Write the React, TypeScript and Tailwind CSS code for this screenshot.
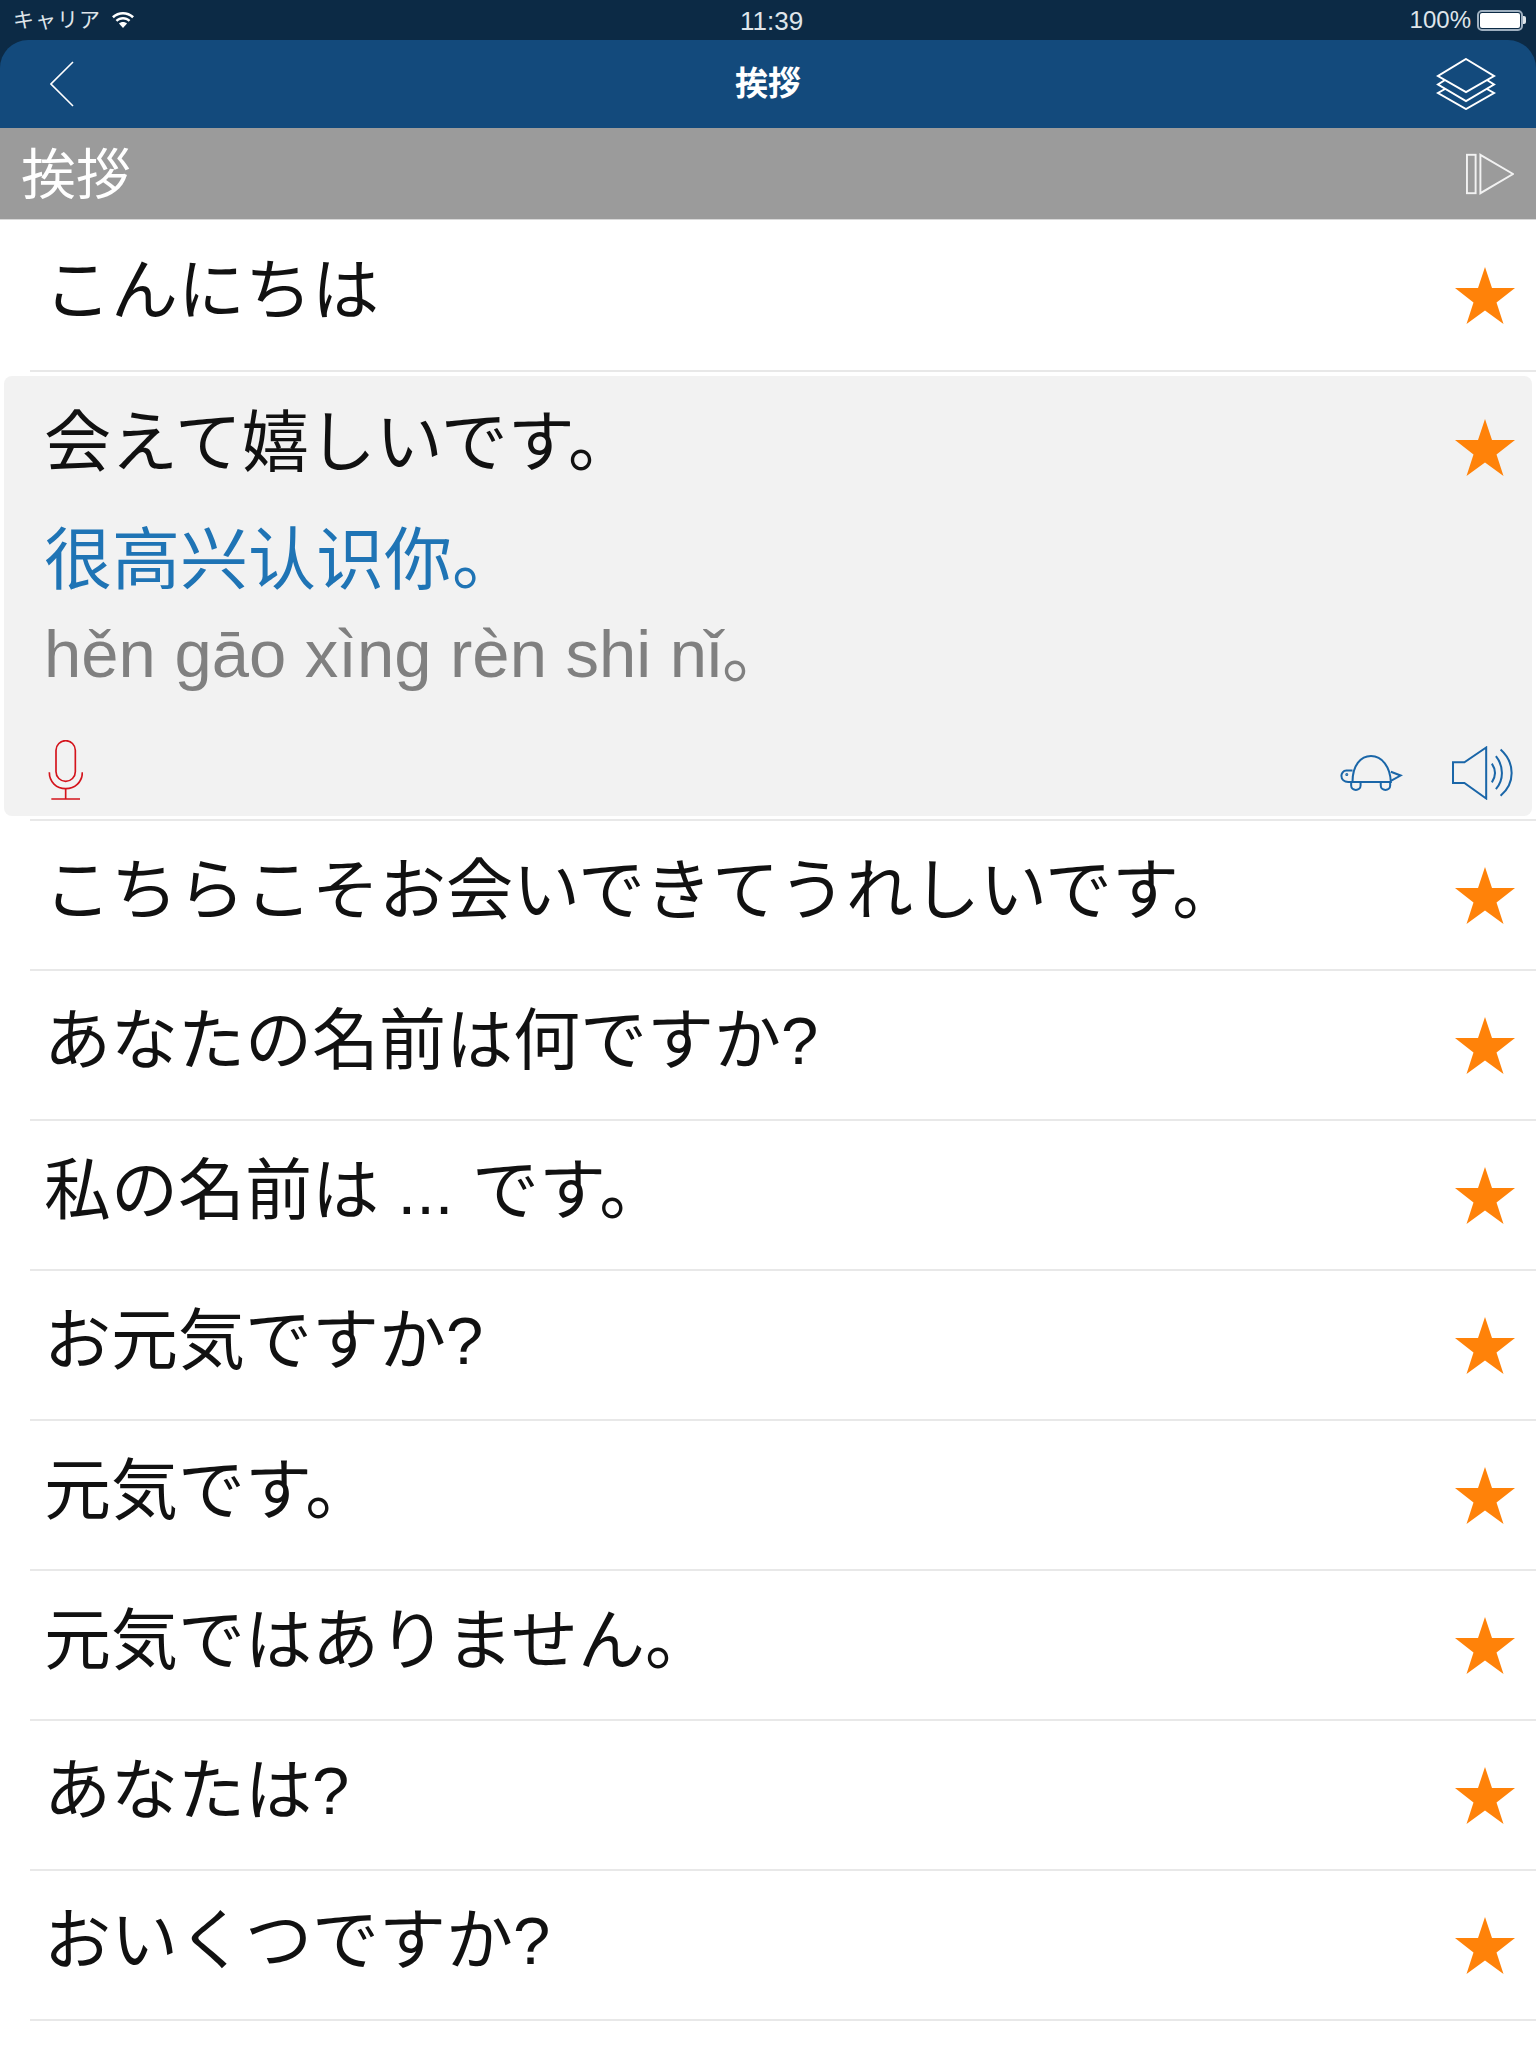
const sans = 'font-["Liberation_Sans","Noto_Sans_CJK_JP",sans-serif]';

function Star() {
  return (
    <svg width="60" height="58" viewBox="0 0 60 58" className="shrink-0">
      <polygon points="30,0 37,21 60,21 41.5,35.5 48.5,57 30,43.5 11.5,57 18.5,35.5 0,21 23,21" fill="#ff8209" />
    </svg>
  );
}

function Row({ text, pl = "pl-[14px]", h = "h-[150px]" }: { text: string; pl?: string; h?: string }) {
  return (
    <div className={`ml-[30px] ${h} flex items-center justify-between border-b-2 border-[#e8e8e8] pr-[21px]`}>
      <span className={`${pl} text-[67px] leading-none text-[#111] whitespace-nowrap pb-[10px]`}>{text}</span>
      <div className="pt-[2px]"><Star /></div>
    </div>
  );
}

function Turtle() {
  return (
    <svg width="64" height="37" viewBox="120 95 190 110" fill="none" stroke="#1a66a8" strokeWidth="6">
      <path d="M160 175 C160 125 185 98 215 98 C248 98 272 130 274 175 Z" />
      <path d="M160 141 H142 C132 141 127 150 127 157 C127 168 136 175 147 175 H160" />
      <path d="M274 145 L303 156 L274 172" />
      <path d="M156 176 V186 C156 203 184 203 184 186 V176" />
      <path d="M244 176 V186 C244 203 272 203 272 186 V176" />
      <circle cx="143" cy="153" r="1.5" fill="#1a66a8" />
    </svg>
  );
}

function Speaker() {
  return (
    <svg width="62" height="54" viewBox="455 70 185 160" fill="none" stroke="#1a66a8" strokeWidth="6">
      <path d="M458 118 H492 L557 74 V226 L492 180 H458 Z" />
      <path d="M574 122 C586 140 586 160 574 178" />
      <path d="M586 100 C610 130 610 170 586 198" />
      <path d="M600 80 C644 120 644 180 600 218" />
    </svg>
  );
}

function Mic() {
  return (
    <svg width="35" height="60" viewBox="145 1140 105 180" fill="none" stroke="#d4141c" strokeWidth="5">
      <rect x="169" y="1142" width="58" height="122" rx="29" />
      <path d="M149 1237 C149 1266 170 1286 198 1286 C226 1286 248 1266 248 1237" />
      <path d="M198 1286 V1317 M155 1317 H241" />
    </svg>
  );
}

export default function App() {
  return (
    <div className={`w-[1536px] h-[2048px] bg-white overflow-hidden ${sans}`}>
      <div className="h-[40px] bg-[#0c2a45] flex items-center justify-between pl-[13px] pr-[10px] text-[#dfe5ea] relative">
        <div className="flex items-center gap-[10px]">
          <span className="text-[21px] tracking-[1px]">キャリア</span>
          <svg width="24" height="18" viewBox="0 0 24 18" fill="white">
            <path d="M12 17 L8 12.5 C10 10.5 14 10.5 16 12.5 Z" />
            <path d="M6.3 10.7 C9.5 7.6 14.5 7.6 17.7 10.7 L19.4 9 C15.2 5 8.8 5 4.6 9 Z" />
            <path d="M2.8 7.2 C8 2.4 16 2.4 21.2 7.2 L23 5.3 C16.8 -0.4 7.2 -0.4 1 5.3 Z" />
          </svg>
        </div>
        <span className="absolute left-[740px] top-[6px] text-[26px] leading-[30px] font-medium">11:39</span>
        <div className="flex items-center gap-[6px]">
          <span className="text-[24px] leading-none">100%</span>
          <div className="flex items-center">
            <div className="w-[46px] h-[21px] rounded-[5px] border-2 border-[#9fb0c0] p-[1px]">
              <div className="w-full h-full bg-white rounded-[2px]" />
            </div>
            <div className="w-[3px] h-[8px] bg-[#dfe5ea] rounded-r-[2px]" />
          </div>
        </div>
      </div>

      <div className="bg-[#0c2a45]">
        <div className="h-[88px] bg-[#134a7c] rounded-t-[28px] flex items-center justify-between pl-[50px] pr-[40px] relative">
          <svg width="24" height="46" viewBox="0 0 24 46" fill="none" stroke="white" strokeWidth="1.6">
            <path d="M23 1 L1 23 L23 45" />
          </svg>
          <span className="absolute left-0 right-0 text-center text-white font-bold text-[33px] leading-none pb-[2px]">挨拶</span>
          <svg width="60" height="52" viewBox="0 0 60 52" fill="none" stroke="white" strokeWidth="2">
            <path d="M30 1 L58 18 L30 34 L2 18 Z" />
            <path d="M9 22 L2 26.5 L30 43 L58 26.5 L51 22" />
            <path d="M9 31 L2 35 L30 51 L58 35 L51 31" />
          </svg>
        </div>
      </div>

      <div className="h-[92px] bg-[#9b9b9b] border-b border-[#d8d8d8] flex items-center justify-between pl-[21px] pr-[22px]">
        <span className="text-[55px] leading-none text-white pt-[3px]">挨拶</span>
        <svg width="48" height="42" viewBox="0 0 50 42" fill="none" stroke="#f2f2f2" strokeWidth="2">
          <rect x="1" y="1" width="9" height="40" />
          <path d="M15 1 L49 21 L15 41 Z" />
        </svg>
      </div>

      <Row text="こんにちは" h="h-[152px]" />

      <div className="mx-[4px] mt-[4px] h-[440px] bg-[#f2f2f2] rounded-[8px] flex flex-col pl-[40px] pr-[17px]">
        <div className="flex justify-between pt-[29px] h-[128px]">
          <span className="text-[67px] leading-[76px] text-[#111] whitespace-nowrap">会えて嬉しいです。</span>
          <div className="pt-[14px]"><Star /></div>
        </div>
        <span className='mt-[16px] text-[68px] leading-[80px] text-[#1f74b5] whitespace-nowrap font-["Liberation_Sans","Noto_Sans_CJK_SC",sans-serif]'>很高兴认识你。</span>
        <span className='mt-[14px] text-[67px] leading-[80px] text-[#808080] whitespace-nowrap font-["Liberation_Sans","Noto_Sans_CJK_SC",sans-serif]'>hěn gāo xìng rèn shi nǐ。</span>
        <div className="mt-auto mb-[16px] flex items-end justify-between">
          <div className="pl-[4px]"><Mic /></div>
          <div className="flex items-end gap-[49px]">
            <div className="pb-[8px]"><Turtle /></div>
            <div className="mr-[1px]"><Speaker /></div>
          </div>
        </div>
      </div>

      <div className="ml-[30px] h-[4px] border-b-2 border-[#e8e8e8] mt-[1px]" />
      <Row text="こちらこそお会いできてうれしいです。" />
      <Row text="あなたの名前は何ですか?" />
      <Row text="私の名前は ... です。" pl="pl-[14px]" />
      <Row text="お元気ですか?" />
      <Row text="元気です。" pl="pl-[14px]" />
      <Row text="元気ではありません。" pl="pl-[14px]" />
      <Row text="あなたは?" />
      <Row text="おいくつですか?" />
    </div>
  );
}
